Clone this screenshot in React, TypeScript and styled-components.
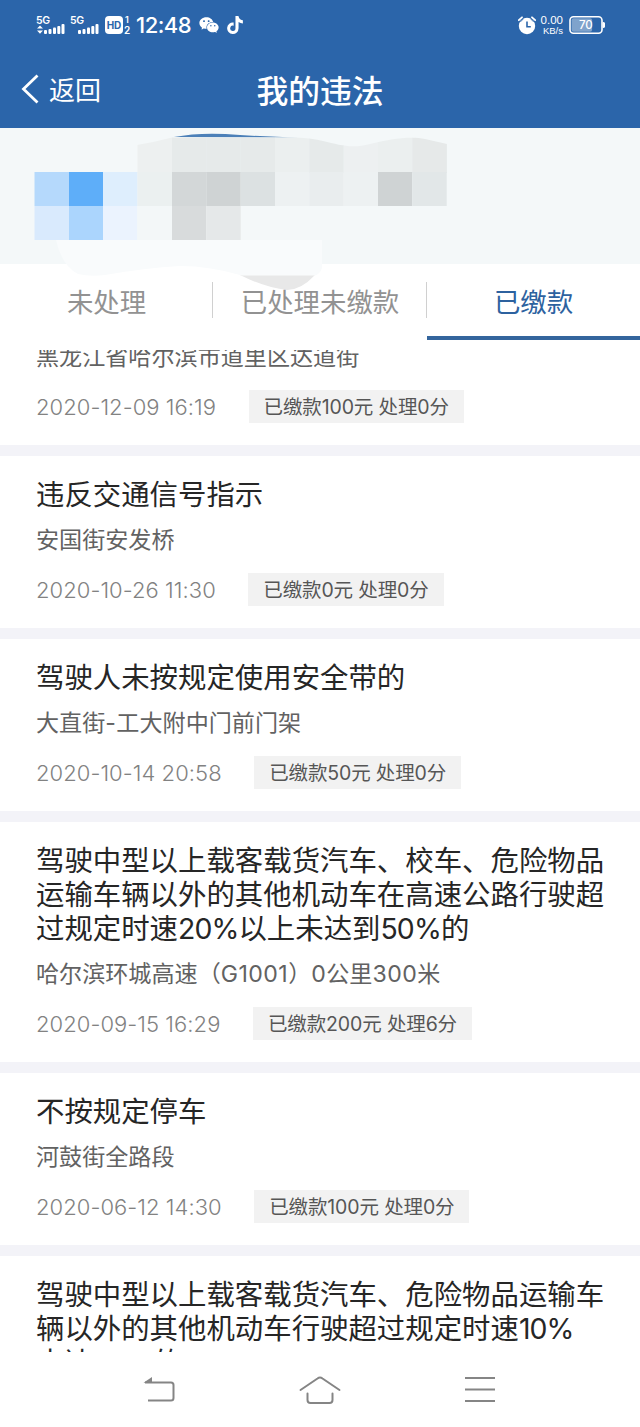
import React from 'react';
import styled, { createGlobalStyle } from 'styled-components';
import { AiFillWechat } from 'react-icons/ai';
import { FaTiktok } from 'react-icons/fa';

const GlobalStyle = createGlobalStyle`
  * { box-sizing: border-box; }
  body {
    margin: 0;
    background: #fff;
    font-family: Inter, 'Noto Sans CJK SC', sans-serif;
  }
`;

const Screen = styled.div`
  width: 640px;
  height: 1427px;
  display: flex;
  flex-direction: column;
  background: #fff;
  overflow: hidden;
`;

const Header = styled.header`
  height: 128px;
  flex: none;
  background: #2b65aa;
  color: #fff;
`;

const StatusBar = styled.div`
  height: 50px;
  display: flex;
  align-items: center;
  padding: 0 35px 0 36px;

  svg { flex: none; display: block; }
`;

const Clock = styled.span`
  width: 57px;
  margin: 0 5px 0 5px;
  font-size: 22px;
  line-height: 24px;
  font-weight: 500;
  letter-spacing: -0.5px;
  white-space: nowrap;
`;

const TiktokIcon = styled(FaTiktok)`
  margin-left: 6px;
`;

const StatusRight = styled.div`
  margin-left: auto;
  display: flex;
  align-items: center;
`;

const NetSpeed = styled.div`
  width: 23px;
  margin: 0 6px 0 4px;
  display: flex;
  flex-direction: column;
  align-items: flex-end;
  font-family: 'Liberation Sans', sans-serif;
  white-space: nowrap;
`;

const Speed = styled.span`
  font-size: 11.5px;
  line-height: 11px;
`;

const SpeedUnit = styled.span`
  font-size: 9.5px;
  line-height: 9px;
`;

const NavBar = styled.div`
  height: 78px;
  display: grid;
  grid-template-columns: 160px 320px 160px;
  align-items: center;
`;

const BackButton = styled.button`
  display: flex;
  align-items: center;
  gap: 10px;
  padding: 0 0 0 21px;
  border: 0;
  background: none;
  color: inherit;
  font: inherit;
  font-size: 26px;
  line-height: 34px;

  span { padding-top: 3px; }
`;

const PageTitle = styled.h1`
  margin: 0;
  padding-top: 5px;
  font-size: 31.8px;
  line-height: 40px;
  font-weight: 500;
  text-align: center;
`;

const Profile = styled.section`
  position: relative;
  z-index: 1;
  height: 136px;
  flex: none;
  background: #f4f8f9;
`;

const Mosaic = styled.svg`
  position: absolute;
  left: 0;
  top: 0;
  display: block;
  pointer-events: none;
`;

const Tabs = styled.nav`
  position: relative;
  z-index: 2;
  height: 76px;
  flex: none;
  display: grid;
  grid-template-columns: 213px 214px 213px;
`;

const Tab = styled.div<{ $active?: boolean; $divider?: boolean }>`
  display: flex;
  align-items: center;
  justify-content: center;
  position: relative;
  font-size: 26.4px;
  color: ${p => (p.$active ? '#2d629f' : '#929292')};
  border-bottom: 4px solid ${p => (p.$active ? '#34659d' : 'transparent')};

  &::after {
    content: '';
    display: ${p => (p.$divider ? 'block' : 'none')};
    position: absolute;
    right: 0;
    top: 18px;
    width: 1px;
    height: 36px;
    background: #d0d0d0;
  }
`;

const List = styled.main`
  height: 1002px;
  margin-top: 10px;
  flex: none;
  overflow: hidden;
  display: flex;
  flex-direction: column;
  gap: 11px;
  background: #f3f3f8;
`;

const Card = styled.article<{ $partial?: boolean }>`
  flex: none;
  background: #fff;
  padding: ${p => (p.$partial ? '0' : '22px')} 30px 22.5px 36px;
  margin-top: ${p => (p.$partial ? '-8px' : '0')};
`;

const Offence = styled.h2`
  margin: 0 0 13px;
  font-size: 28.42px;
  line-height: 34px;
  font-weight: 400;
  color: #262626;
  white-space: pre-line;
`;

const Address = styled.p`
  margin: 0 0 17.5px;
  font-size: 23.1px;
  line-height: 30px;
  color: #626262;
`;

const Latin = styled.span<{ $tracking: number }>`
  letter-spacing: ${p => p.$tracking}px;
`;

const Meta = styled.div`
  display: flex;
  align-items: center;
  height: 33px;
`;

const DateText = styled.time`
  padding-top: 2px;
  font-size: 22px;
  font-weight: 300;
  letter-spacing: 0.05px;
  color: #828282;
  white-space: nowrap;
`;

const Tag = styled.span`
  margin-left: 32.5px;
  height: 33px;
  padding: 0 15px;
  background: #f2f2f2;
  color: #565656;
  font-size: 19.5px;
  line-height: 34px;
  letter-spacing: -0.13px;
  white-space: nowrap;
`;

const SystemNav = styled.footer`
  flex: 1;
  display: grid;
  grid-template-columns: repeat(3, 160px);
  justify-content: center;
  justify-items: center;
  padding-top: 21px;
`;

const Signal = ({ arrows, width }: { arrows?: boolean; width: number }) => (
  <svg width={width} height="22" viewBox={`0 0 ${width} 22`} fill="#fff">
    <text x="0" y="9.7" fontSize="10.5" fontWeight="600" fontFamily="Inter, sans-serif" letterSpacing="-0.3">5G</text>
    {arrows && <path d="M1 14.5 4 11.5 7 14.5ZM1 16.5 4 19.8 7 16.5Z" />}
    <rect x="8" y="16" width="3" height="4" rx="1" />
    <rect x="12.5" y="15" width="3" height="5" rx="1" />
    <rect x="17" y="13.5" width="3" height="6.5" rx="1" />
    <rect x="21.3" y="12" width="3" height="8" rx="1" />
    <rect x="25.5" y="10" width="3" height="10" rx="1" />
  </svg>
);

const HdBadge = () => (
  <svg width="26" height="20" viewBox="0 0 26 20" fill="#fff">
    <rect x="0" y="1" width="18" height="18" rx="4" />
    <text x="9" y="13.7" fontSize="10" fontWeight="700" textAnchor="middle" fontFamily="Inter, sans-serif" fill="#2b65aa">HD</text>
    <text x="20" y="8" fontSize="9" fontWeight="600" fontFamily="Inter, sans-serif">1</text>
    <text x="19" y="19" fontSize="10" fontWeight="600" fontFamily="Inter, sans-serif">2</text>
  </svg>
);

const AlarmIcon = () => (
  <svg width="18" height="20" viewBox="0 0 18 20">
    <circle cx="9" cy="11" r="8.2" fill="#fff" />
    <path d="M.8 5.2 4 2.3M17.2 5.2 14 2.3" stroke="#fff" strokeWidth="1.8" strokeLinecap="round" />
    <path d="M2.5 6.8 5.6 3.6M15.5 6.8 12.4 3.6" stroke="#2b65aa" strokeWidth="0.9" />
    <path d="M9 6.5v5.2h3.8" stroke="#2b65aa" strokeWidth="1.6" fill="none" />
  </svg>
);

const Battery = () => (
  <svg width="36" height="20" viewBox="0 0 36 20">
    <rect x="1" y="1.7" width="32" height="16.6" rx="3.5" fill="none" stroke="#fff" strokeWidth="1.6" />
    <rect x="2.6" y="3.3" width="20.5" height="13.4" rx="2" fill="#7fa3cc" />
    <path d="M34 7.5a1.8 1.8 0 0 1 0 5z" fill="#fff" stroke="#fff" />
    <text x="16.8" y="14.2" fontSize="11.5" fontWeight="500" textAnchor="middle" fontFamily="Inter, sans-serif" fill="#fff">70</text>
  </svg>
);

const columns = [34.5, 69, 103, 137.5, 172, 206.3, 240.7, 275, 309.3, 343.7, 378, 412.3, 446.7];
const rowTops = [0, 44, 78, 112];
const cells: Array<[number, number, string]> = [
  [1, 0, '#b5d9fc'], [1, 1, '#5eaef9'], [1, 2, '#deeefd'], [1, 3, '#ebf0f0'],
  [1, 4, '#d3d7d8'], [1, 5, '#cfd3d4'], [1, 6, '#dce1e2'], [1, 7, '#edf1f2'],
  [1, 8, '#e9edee'], [1, 9, '#edf1f2'], [1, 10, '#cfd3d4'], [1, 11, '#e2e7e8'],
  [2, 0, '#d9eafd'], [2, 1, '#abd5fd'], [2, 2, '#ebf3fe'], [2, 3, '#f3f7f8'],
  [2, 4, '#d8dbdc'], [2, 5, '#e5e8e9'],
];
const topShades = ['#edf0f0', '#e6eaea', '#e6eaea', '#e6eaea', '#ebefef', '#e6eaea', '#edf0f1', '#ebefef', '#e6e9e9'];

const CensoredProfile = () => (
  <Mosaic width="640" height="170" viewBox="0 0 640 170">
    <defs>
      <clipPath id="wave">
        <path d="M137 17Q155 14 172 9.5H296Q312 10 323 13C340 17 352 21 370 16C390 11 410 8 425 11L447 16V45H137Z" />
      </clipPath>
    </defs>
    <path d="M240 147H315Q301 162 287 162Q266 160 240 147Z" fill="#e8e8e8" />
    <path d="M56 112H322V140Q320 146 315 147.5H242Q210 138 180 138Q145 140 105 147Q90 149 78 146Q62 138 56 112Z" fill="#f9fbfc" />
    <path d="M174 9Q202 3.5 240 7Q272 9 298 9.5Z" fill="#4c80b8" />
    <g clipPath="url(#wave)">
      {topShades.map((c, i) => (
        <rect key={i} x={columns[i + 3]} y="0" width="34.6" height="45" fill={c} />
      ))}
    </g>
    {cells.map(([r, c, color]) => (
      <rect
        key={`${r}-${c}`}
        x={columns[c]}
        y={rowTops[r]}
        width={columns[c + 1] - columns[c]}
        height={rowTops[r + 1] - rowTops[r]}
        fill={color}
      />
    ))}
  </Mosaic>
);

const MixedText = ({ text, tracking }: { text: string; tracking: number }) => (
  <>
    {text.split(/([A-Z0-9%-]+)/).map((part, i) =>
      i % 2 ? <Latin key={i} $tracking={tracking}>{part}</Latin> : part
    )}
  </>
);

type Violation = { offence?: string; address?: string; date?: string; status?: string };

const violations: Violation[] = [
  { address: '黑龙江省哈尔滨市道里区达道街', date: '2020-12-09 16:19', status: '已缴款100元 处理0分' },
  { offence: '违反交通信号指示', address: '安国街安发桥', date: '2020-10-26 11:30', status: '已缴款0元 处理0分' },
  { offence: '驾驶人未按规定使用安全带的', address: '大直街-工大附中门前门架', date: '2020-10-14 20:58', status: '已缴款50元 处理0分' },
  {
    offence: '驾驶中型以上载客载货汽车、校车、危险物品\n运输车辆以外的其他机动车在高速公路行驶超\n过规定时速20%以上未达到50%的',
    address: '哈尔滨环城高速（G1001）0公里300米', date: '2020-09-15 16:29', status: '已缴款200元 处理6分',
  },
  { offence: '不按规定停车', address: '河鼓街全路段', date: '2020-06-12 14:30', status: '已缴款100元 处理0分' },
  { offence: '驾驶中型以上载客载货汽车、危险物品运输车\n辆以外的其他机动车行驶超过规定时速10%\n未达20%的' },
];

export default function App() {
  return (
    <Screen>
      <GlobalStyle />
      <Header>
        <StatusBar>
          <Signal arrows width={34} />
          <Signal width={35} />
          <HdBadge />
          <Clock>12:48</Clock>
          <AiFillWechat size={22} />
          <TiktokIcon size={18} />
          <StatusRight>
            <AlarmIcon />
            <NetSpeed><Speed>0.00</Speed><SpeedUnit>KB/s</SpeedUnit></NetSpeed>
            <Battery />
          </StatusRight>
        </StatusBar>
        <NavBar>
          <BackButton>
            <svg width="18" height="30" viewBox="0 0 18 30" fill="none" stroke="#fff" strokeWidth="2.8">
              <path d="M16.5 1.5 2.5 15l14 13.5" />
            </svg>
            <span>返回</span>
          </BackButton>
          <PageTitle>我的违法</PageTitle>
        </NavBar>
      </Header>
      <Profile><CensoredProfile /></Profile>
      <Tabs>
        <Tab $divider>未处理</Tab>
        <Tab $divider>已处理未缴款</Tab>
        <Tab $active>已缴款</Tab>
      </Tabs>
      <List>
        {violations.map((v, i) => (
          <Card key={i} $partial={!v.offence}>
            {v.offence && <Offence><MixedText text={v.offence} tracking={-0.9} /></Offence>}
            {v.address && <Address><MixedText text={v.address} tracking={0.45} /></Address>}
            {v.date && <Meta><DateText>{v.date}</DateText><Tag>{v.status}</Tag></Meta>}
          </Card>
        ))}
      </List>
      <SystemNav>
        <svg width="34" height="32" viewBox="0 0 34 32" fill="none" stroke="#858585" strokeWidth="2">
          <path d="M2 9.5H28q2.5 0 2.5 2.5V25q0 2.5-2.5 2.5H5" />
          <path d="M.5 9.7 9 4V9.7Z" fill="#858585" stroke="none" />
        </svg>
        <svg width="44" height="34" viewBox="0 0 44 34" fill="none" stroke="#858585" strokeWidth="2" strokeLinecap="round">
          <path d="M2.5 17 19.5 5.5Q22 3.5 24.5 5.5L41.5 17" />
          <path d="M9.5 20.5V27q0 3 3 3h19q3 0 3-3V20.5" />
        </svg>
        <svg width="30" height="32" viewBox="0 0 30 32" stroke="#858585" strokeWidth="2">
          <path d="M0 5H30M0 16.5H30M0 28H30" />
        </svg>
      </SystemNav>
    </Screen>
  );
}
